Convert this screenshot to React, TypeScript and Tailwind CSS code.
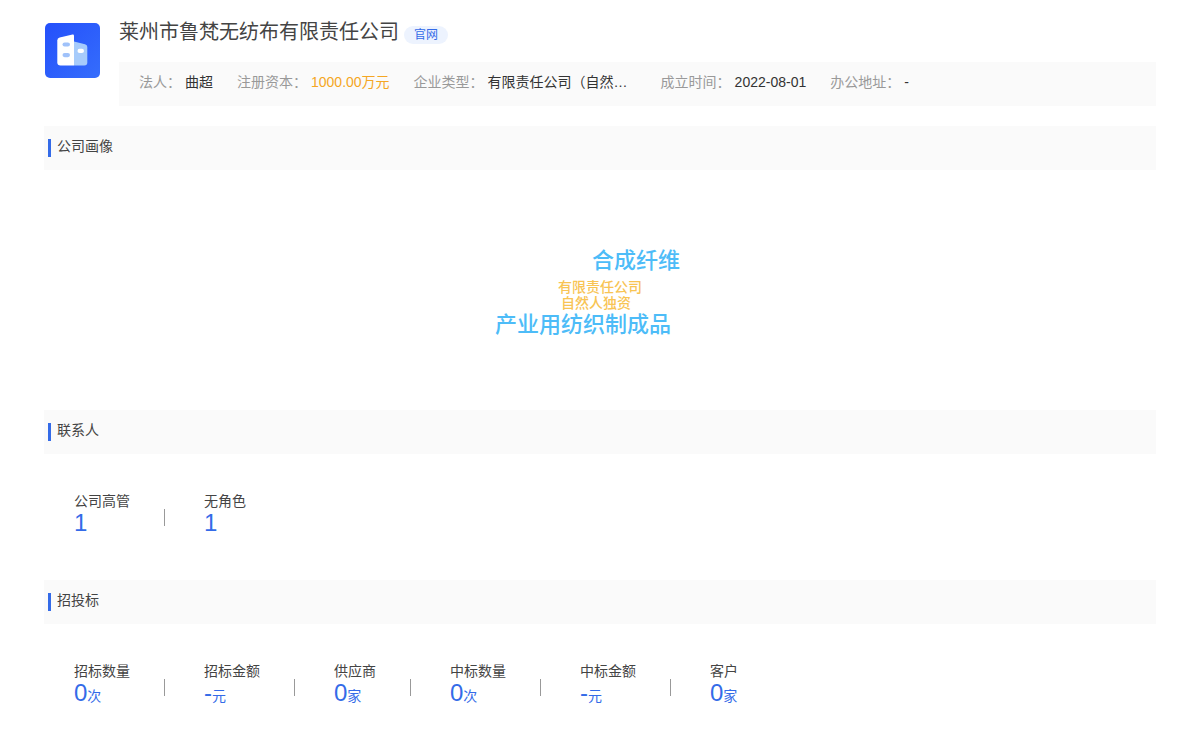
const infos = [
  { label: "法人：", value: "曲超", style: "text-[#333333]" },
  { label: "注册资本：", value: "1000.00万元", style: "text-[#f5a623]" },
  { label: "企业类型：", value: "有限责任公司（自然…", style: "text-[#333333] w-[149px]" },
  { label: "成立时间：", value: "2022-08-01", style: "text-[#333333]" },
  { label: "办公地址：", value: "-", style: "text-[#333333]" },
];

const contacts = [
  { label: "公司高管", value: "1", unit: "" },
  { label: "无角色", value: "1", unit: "" },
];

const bids = [
  { label: "招标数量", value: "0", unit: "次" },
  { label: "招标金额", value: "-", unit: "元" },
  { label: "供应商", value: "0", unit: "家" },
  { label: "中标数量", value: "0", unit: "次" },
  { label: "中标金额", value: "-", unit: "元" },
  { label: "客户", value: "0", unit: "家" },
];

function CompanyLogo() {
  return (
    <svg className="w-14 h-14 shrink-0" viewBox="0 0 56 56" aria-hidden="true">
      <defs>
        <linearGradient id="logo-bg" x1="0" y1="0" x2="1" y2="1">
          <stop offset="0" stopColor="#2450fb" />
          <stop offset="1" stopColor="#356dfc" />
        </linearGradient>
      </defs>
      <rect x="1" y="1" width="55" height="55" rx="5" fill="url(#logo-bg)" />
      <path d="M30 19.500 41 22.300q2.300.7 2.300 2.700V40.500q0 3-3 3H30Z" fill="#a6cbfb" />
      <path d="M15.700 15.600 28.500 12.600Q30 12.300 30 13.800V43.500H16.500Q13.300 43.500 13.300 40.500V18.400Q13.300 16.200 15.700 15.600Z" fill="#fff" />
      <rect x="18.500" y="20.400" width="7.500" height="4.200" rx="2.100" fill="#a0c2fa" />
      <rect x="18.500" y="31" width="7.500" height="4.200" rx="2.100" fill="#a0c2fa" />
      <rect x="33.500" y="26.800" width="6.500" height="4.200" rx="2.100" fill="#fff" />
    </svg>
  );
}

function SectionTitle({ children }: { children: string }) {
  return (
    <div className="h-11 bg-[#fafafa] flex items-center px-1">
      <span className="w-[3px] h-[18px] bg-[#346be8]" />
      <h2 className="ml-1.5 pb-1 text-sm text-[#444444]">{children}</h2>
    </div>
  );
}

function Stats({ items }: { items: typeof bids }) {
  return (
    <dl className="flex pl-[30px] pt-9">
      {items.map((item, i) => (
        <div key={item.label} className="flex items-center">
          {i > 0 && <span className="w-px h-[17px] mt-2 ml-[34px] mr-[39px] bg-[#999999]" />}
          <div>
            <dt className="text-sm leading-[22px] text-[#444444]">{item.label}</dt>
            <dd className="text-2xl leading-[22px] text-[#346be8]">
              {item.value}
              <span className="text-sm leading-[22px]">{item.unit}</span>
            </dd>
          </div>
        </div>
      ))}
    </dl>
  );
}

function WordCloud() {
  return (
    <div className="relative w-[188px] h-24 mx-auto whitespace-nowrap">
      <span className="absolute left-[86px] top-px text-[22px] leading-8 font-medium text-[#4dbcf8]">合成纤维</span>
      <span className="absolute left-[52px] top-[35px] text-sm leading-4 font-medium text-[#f8c454]">有限责任公司</span>
      <span className="absolute left-[55px] top-[51px] text-sm leading-4 font-medium text-[#f8c454]">自然人独资</span>
      <span className="absolute -left-[11px] top-[65px] text-[22px] leading-8 font-medium text-[#4dbcf8]">产业用纺织制成品</span>
    </div>
  );
}

export default function App() {
  return (
    <main className="min-h-screen bg-white px-11 pt-[22px] pb-10 font-['Liberation_Sans','Noto_Sans_CJK_SC',sans-serif]">
      <header className="flex">
        <CompanyLogo />
        <div className="ml-[19px] flex-1 min-w-0">
          <div className="flex items-start h-10">
            <h1 className="text-xl leading-5 text-[#444444]">莱州市鲁梵无纺布有限责任公司</h1>
            <a href="#" className="ml-[5px] mt-1 px-2.5 h-[18px] leading-[18px] rounded-full bg-[#edf3fe] text-xs text-[#346be8]">
              官网
            </a>
          </div>
          <dl className="flex gap-6 h-11 pl-5 pb-1 items-center bg-[#fafafa] text-sm whitespace-nowrap">
            {infos.map((info) => (
              <div key={info.label} className="flex gap-1">
                <dt className="text-[#999999]">{info.label}</dt>
                <dd className={info.style}>{info.value}</dd>
              </div>
            ))}
          </dl>
        </div>
      </header>

      <section className="mt-5">
        <SectionTitle>公司画像</SectionTitle>
        <div className="h-60 pt-[74px]">
          <WordCloud />
        </div>
      </section>

      <section>
        <SectionTitle>联系人</SectionTitle>
        <Stats items={contacts} />
      </section>

      <section className="mt-[43px]">
        <SectionTitle>招投标</SectionTitle>
        <Stats items={bids} />
      </section>
    </main>
  );
}
